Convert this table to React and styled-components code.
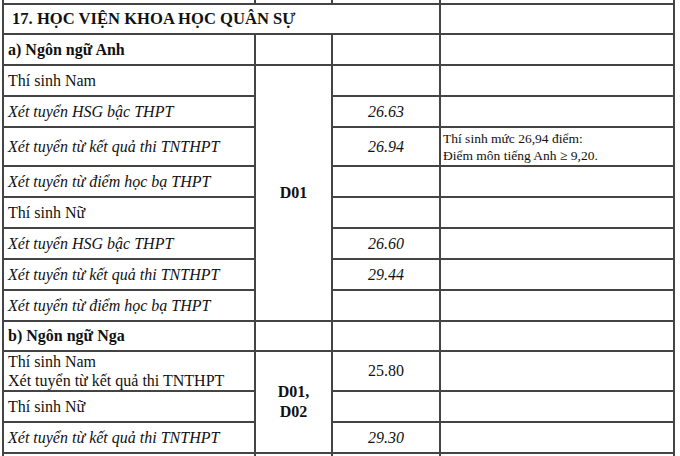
import React from "react";
import styled, { createGlobalStyle } from "styled-components";

const Global = createGlobalStyle`
  html, body { margin: 0; padding: 0; background: #fff; overflow: hidden; }
  body { font-family: "Liberation Serif", "Times New Roman", Times, serif; color: #111; }
`;

const Sheet = styled.div`
  width: 680px;
  height: 456px;
  overflow: hidden;
  background: #fff;
  font-family: "Liberation Serif", "Times New Roman", Times, serif;
`;

const Grid = styled.div`
  margin-left: 2px;
  display: grid;
  grid-template-columns: 252px 77px 108px 234px;
  grid-template-rows: 5px 30px 31px 31px 31px 39px 31px 31px 31px 31px 31px 30px 40px 31px 31px 20px;
  border-left: 2px solid #444;
  width: max-content;
`;

const Cell = styled.div`
  box-sizing: border-box;
  font-family: "Liberation Serif", "Times New Roman", Times, serif;
  border-right: 2px solid #444;
  border-bottom: ${(p) => (p.$open ? "none" : "2px solid #444")};
  grid-column: ${(p) => (p.$span ? `span ${p.$span}` : "auto")};
  grid-row: ${(p) => (p.$rows ? `span ${p.$rows}` : "auto")};
  display: flex;
  align-items: center;
  justify-content: ${(p) => (p.$center ? "center" : "flex-start")};
  text-align: ${(p) => (p.$center ? "center" : "left")};
  padding: ${(p) => (p.$pad != null ? p.$pad : "0 0 0 4px")};
  font-size: ${(p) => p.$size || "16px"};
  line-height: ${(p) => p.$lh || "18px"};
  font-weight: ${(p) => (p.$bold ? 700 : 400)};
  font-style: ${(p) => (p.$italic ? "italic" : "normal")};
  white-space: nowrap;
`;

const Lines = styled.div`
  display: flex;
  flex-direction: column;
`;

const Empty = () => <Cell />;

export default function App() {
  return (
    <Sheet>
      <Global />
      <Grid>
        <Cell />
        <Cell />
        <Cell />
        <Cell />

        <Cell $span={3} $bold $size="16.6px" $pad="0 0 0 8px">
          17. HỌC VIỆN KHOA HỌC QUÂN SỰ
        </Cell>
        <Empty />

        <Cell $bold>a) Ngôn ngữ Anh</Cell>
        <Empty />
        <Empty />
        <Empty />

        <Cell>Thí sinh Nam</Cell>
        <Cell $rows={8} $center $bold $pad="0">
          D01
        </Cell>
        <Empty />
        <Empty />

        <Cell $italic>Xét tuyển HSG bậc THPT</Cell>
        <Cell $italic $center $pad="0">26.63</Cell>
        <Empty />

        <Cell $italic>Xét tuyển từ kết quả thi TNTHPT</Cell>
        <Cell $italic $center $pad="0">26.94</Cell>
        <Cell $size="13.5px" $lh="17px" $pad="0 0 0 2px">
          <Lines>
            <span>Thí sinh mức 26,94 điểm:</span>
            <span>Điểm môn tiếng Anh ≥ 9,20.</span>
          </Lines>
        </Cell>

        <Cell $italic>Xét tuyển từ điểm học bạ THPT</Cell>
        <Empty />
        <Empty />

        <Cell>Thí sinh Nữ</Cell>
        <Empty />
        <Empty />

        <Cell $italic>Xét tuyển HSG bậc THPT</Cell>
        <Cell $italic $center $pad="0">26.60</Cell>
        <Empty />

        <Cell $italic>Xét tuyển từ kết quả thi TNTHPT</Cell>
        <Cell $italic $center $pad="0">29.44</Cell>
        <Empty />

        <Cell $italic>Xét tuyển từ điểm học bạ THPT</Cell>
        <Empty />
        <Empty />

        <Cell $bold>b) Ngôn ngữ Nga</Cell>
        <Empty />
        <Empty />
        <Empty />

        <Cell $lh="19px">
          <Lines>
            <span>Thí sinh Nam</span>
            <span>Xét tuyển từ kết quả thi TNTHPT</span>
          </Lines>
        </Cell>
        <Cell $rows={3} $center $bold $pad="0" $lh="20px">
          <Lines>
            <span>D01,</span>
            <span>D02</span>
          </Lines>
        </Cell>
        <Cell $center $pad="0">25.80</Cell>
        <Empty />

        <Cell>Thí sinh Nữ</Cell>
        <Empty />
        <Empty />

        <Cell $italic>Xét tuyển từ kết quả thi TNTHPT</Cell>
        <Cell $italic $center $pad="0">29.30</Cell>
        <Empty />

        <Cell $open />
        <Cell $open />
        <Cell $open />
        <Cell $open />
      </Grid>
    </Sheet>
  );
}
